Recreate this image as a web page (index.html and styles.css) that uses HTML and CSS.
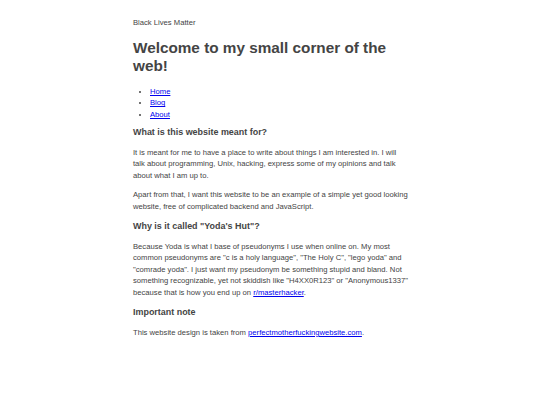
FILE: index.html
```html
<!DOCTYPE html>
<html lang="en">
<head>
<meta charset="utf-8">
<title>Yoda's Hut</title>
<link rel="stylesheet" href="styles.css">
</head>
<body>
<header class="banner">Black Lives Matter</header>
<h1 class="title">Welcome to my small corner of the web!</h1>
<ul class="nav">
<li><a href="#">Home</a></li>
<li><a href="#">Blog</a></li>
<li><a href="#">About</a></li>
</ul>
<h2 class="section lead">What is this website meant for?</h2>
<p>It is meant for me to have a place to write about things I am interested in. I will talk about programming, Unix, hacking, express some of my opinions and talk about what I am up to.</p>
<p>Apart from that, I want this website to be an example of a simple yet good looking website, free of complicated backend and JavaScript.</p>
<h2 class="section">Why is it called "Yoda's Hut"?</h2>
<p>Because Yoda is what I base of pseudonyms I use when online on. My most common pseudonyms are "c is a holy language", "The Holy C", "lego yoda" and "comrade yoda". I just want my pseudonym be something stupid and bland. Not something recognizable, yet not skiddish like "H4XX0R123" or "Anonymous1337" because that is how you end up on <a href="#">r/masterhacker</a>.</p>
<h2 class="section">Important note</h2>
<p>This website design is taken from <a href="#">perfectmotherfuckingwebsite.com</a>.</p>
</body>
</html>
```

FILE: styles.css
```css
html {
  background: #fff;
}
body {
  max-width: 276px;
  margin: 17px auto;
  padding: 0 3.25px 0 5.25px;
  font-family: "Liberation Sans", Arial, sans-serif;
  font-size: 7.65px;
  line-height: 1.5;
  color: #444;
}
.banner {
  display: block;
}
.title {
  font-size: 15.3px;
  line-height: 1.2;
  margin: 10.25px 0;
}
.nav {
  margin: 7.65px 0 0;
  padding-left: 17px;
}
.section {
  font-size: 8.95px;
  line-height: 1.2;
  margin: 8.95px 0;
}
.section.lead {
  margin-top: 7.2px;
}
p {
  margin: 7.65px 0;
}
a {
  color: #0000ee;
}
```
